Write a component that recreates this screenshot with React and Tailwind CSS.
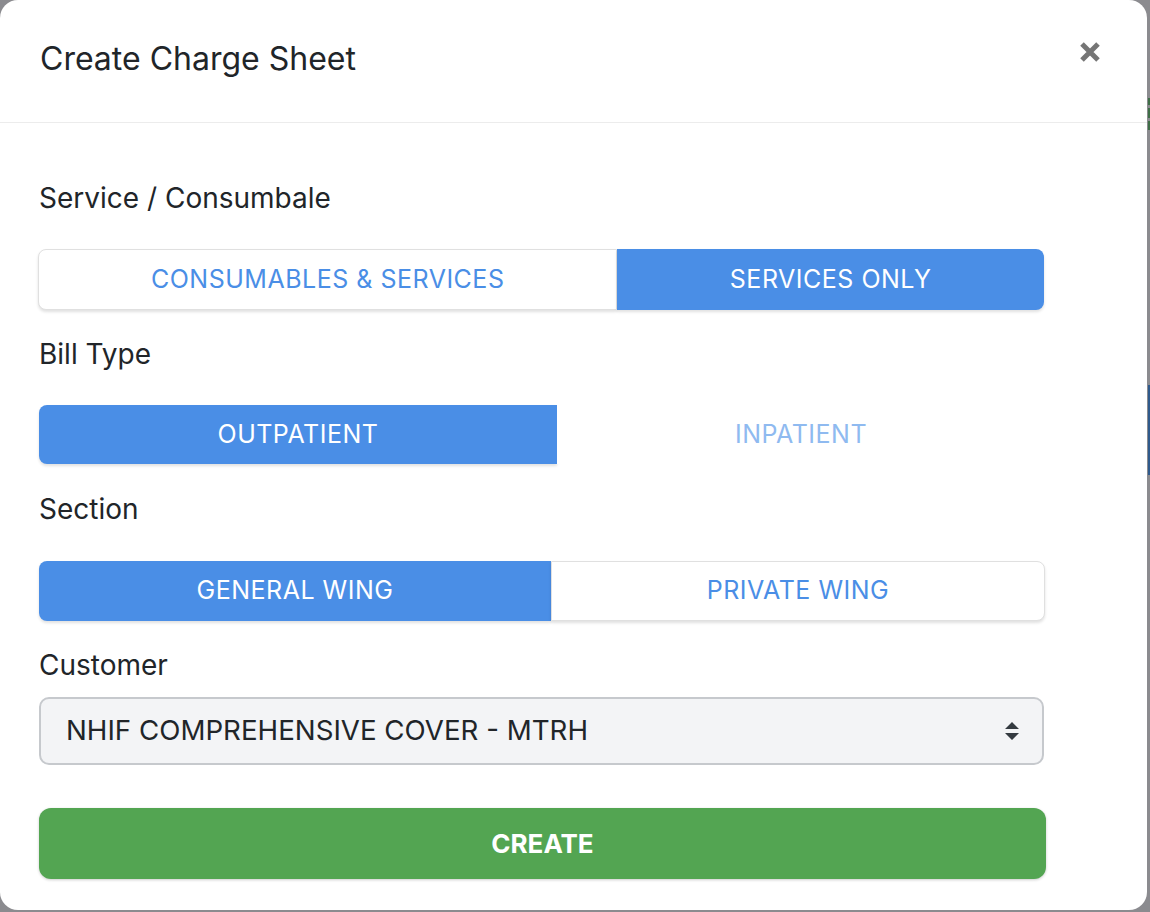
const inter = { fontFamily: 'Inter, "Noto Sans", sans-serif' };

function Segment({ options, height = 60 }) {
  return (
    <div className="flex w-[1006px]" style={{ height }}>
      {options.map((o) => (
        <div
          key={o.label}
          style={{ width: o.width }}
          className={`flex items-center justify-center text-[25px] tracking-[0.5px] ${o.cls}`}
        >
          {o.label}
        </div>
      ))}
    </div>
  );
}

export default function App() {
  return (
    <div className="flex h-[912px] w-[1150px] overflow-hidden bg-[#8b8b8f]" style={inter}>
      <div className="flex h-[910px] w-[1147px] shrink-0 flex-col rounded-[18px] bg-white">
        {/* header */}
        <div className="flex h-[123px] items-center justify-between border-b border-[#ececec] pl-[40px] pr-[48px]">
          <h2 className="mb-[4px] text-[32px] text-[#212529]">Create Charge Sheet</h2>
          <svg width="24" height="24" viewBox="0 0 24 24" className="mb-[18px] mr-[-3px]">
            <path d="M4 4 L20 20 M20 4 L4 20" stroke="#757575" strokeWidth="5" />
          </svg>
        </div>

        {/* body */}
        <div className="flex flex-col pl-[39px] pt-[58px]">
          <label className="text-[28px] leading-[34px] text-[#212529]">Service / Consumbale</label>
          <div className="mt-[34px] ml-[-1px]">
            <Segment
              height={61}
              options={[
                {
                  label: 'CONSUMABLES & SERVICES',
                  width: 580,
                  cls: 'rounded-l-[8px] border border-[#e0e0e0] bg-white text-[#4a8ee6] shadow-[0_2px_3px_rgba(0,0,0,0.12)]',
                },
                {
                  label: 'SERVICES ONLY',
                  width: 427,
                  cls: 'rounded-r-[8px] bg-[#4a8ee6] text-white shadow-[0_2px_3px_rgba(0,0,0,0.12)]',
                },
              ]}
            />
          </div>

          <label className="mt-[27px] text-[28px] leading-[34px] text-[#212529]">Bill Type</label>
          <div className="mt-[34px]">
            <Segment
              height={59}
              options={[
                {
                  label: 'OUTPATIENT',
                  width: 518,
                  cls: 'rounded-l-[8px] bg-[#4a8ee6] text-white shadow-[0_2px_3px_rgba(0,0,0,0.12)]',
                },
                {
                  label: 'INPATIENT',
                  width: 488,
                  cls: 'bg-white text-[#8fbaf0]',
                },
              ]}
            />
          </div>

          <label className="mt-[28px] text-[28px] leading-[34px] text-[#212529]">Section</label>
          <div className="mt-[35px]">
            <Segment
              options={[
                {
                  label: 'GENERAL WING',
                  width: 512,
                  cls: 'rounded-l-[8px] bg-[#4a8ee6] text-white shadow-[0_2px_3px_rgba(0,0,0,0.12)]',
                },
                {
                  label: 'PRIVATE WING',
                  width: 494,
                  cls: 'rounded-r-[8px] border border-[#e0e0e0] bg-white text-[#4a8ee6] shadow-[0_2px_3px_rgba(0,0,0,0.12)]',
                },
              ]}
            />
          </div>

          <label className="mt-[27px] text-[28px] leading-[34px] text-[#212529]">Customer</label>
          <div className="mt-[15px] flex h-[68px] w-[1005px] items-center justify-between rounded-[10px] border-2 border-[#c6c9cd] bg-[#f3f4f6] pl-[25px] pr-[22px]">
            <span className="text-[27.7px] text-[#212529]">NHIF COMPREHENSIVE COVER - MTRH</span>
            <svg width="16" height="20" viewBox="0 0 16 20">
              <path d="M8 1 L15 8 L1 8 Z M1 12 L15 12 L8 19 Z" fill="#343a40" />
            </svg>
          </div>

          <button className="mt-[43px] flex h-[71px] w-[1007px] items-center justify-center rounded-[12px] bg-[#53a552] text-[26px] font-bold text-white shadow-[0_1px_3px_rgba(0,0,0,0.2)]">
            CREATE
          </button>
        </div>
      </div>

      {/* backdrop content peeking at the right */}
      <div className="ml-[1px] flex w-[3px] flex-col">
        <div className="h-[98px]" />
        <div className="h-[7px] bg-[#3f6e47]" />
        <div className="h-[3px]" />
        <div className="h-[10px] bg-[#3f6e47]" />
        <div className="h-[3px]" />
        <div className="h-[9px] bg-[#3f6e47]" />
        <div className="h-[255px]" />
        <div className="h-[90px] bg-[#2f5a8c]" />
      </div>
    </div>
  );
}
